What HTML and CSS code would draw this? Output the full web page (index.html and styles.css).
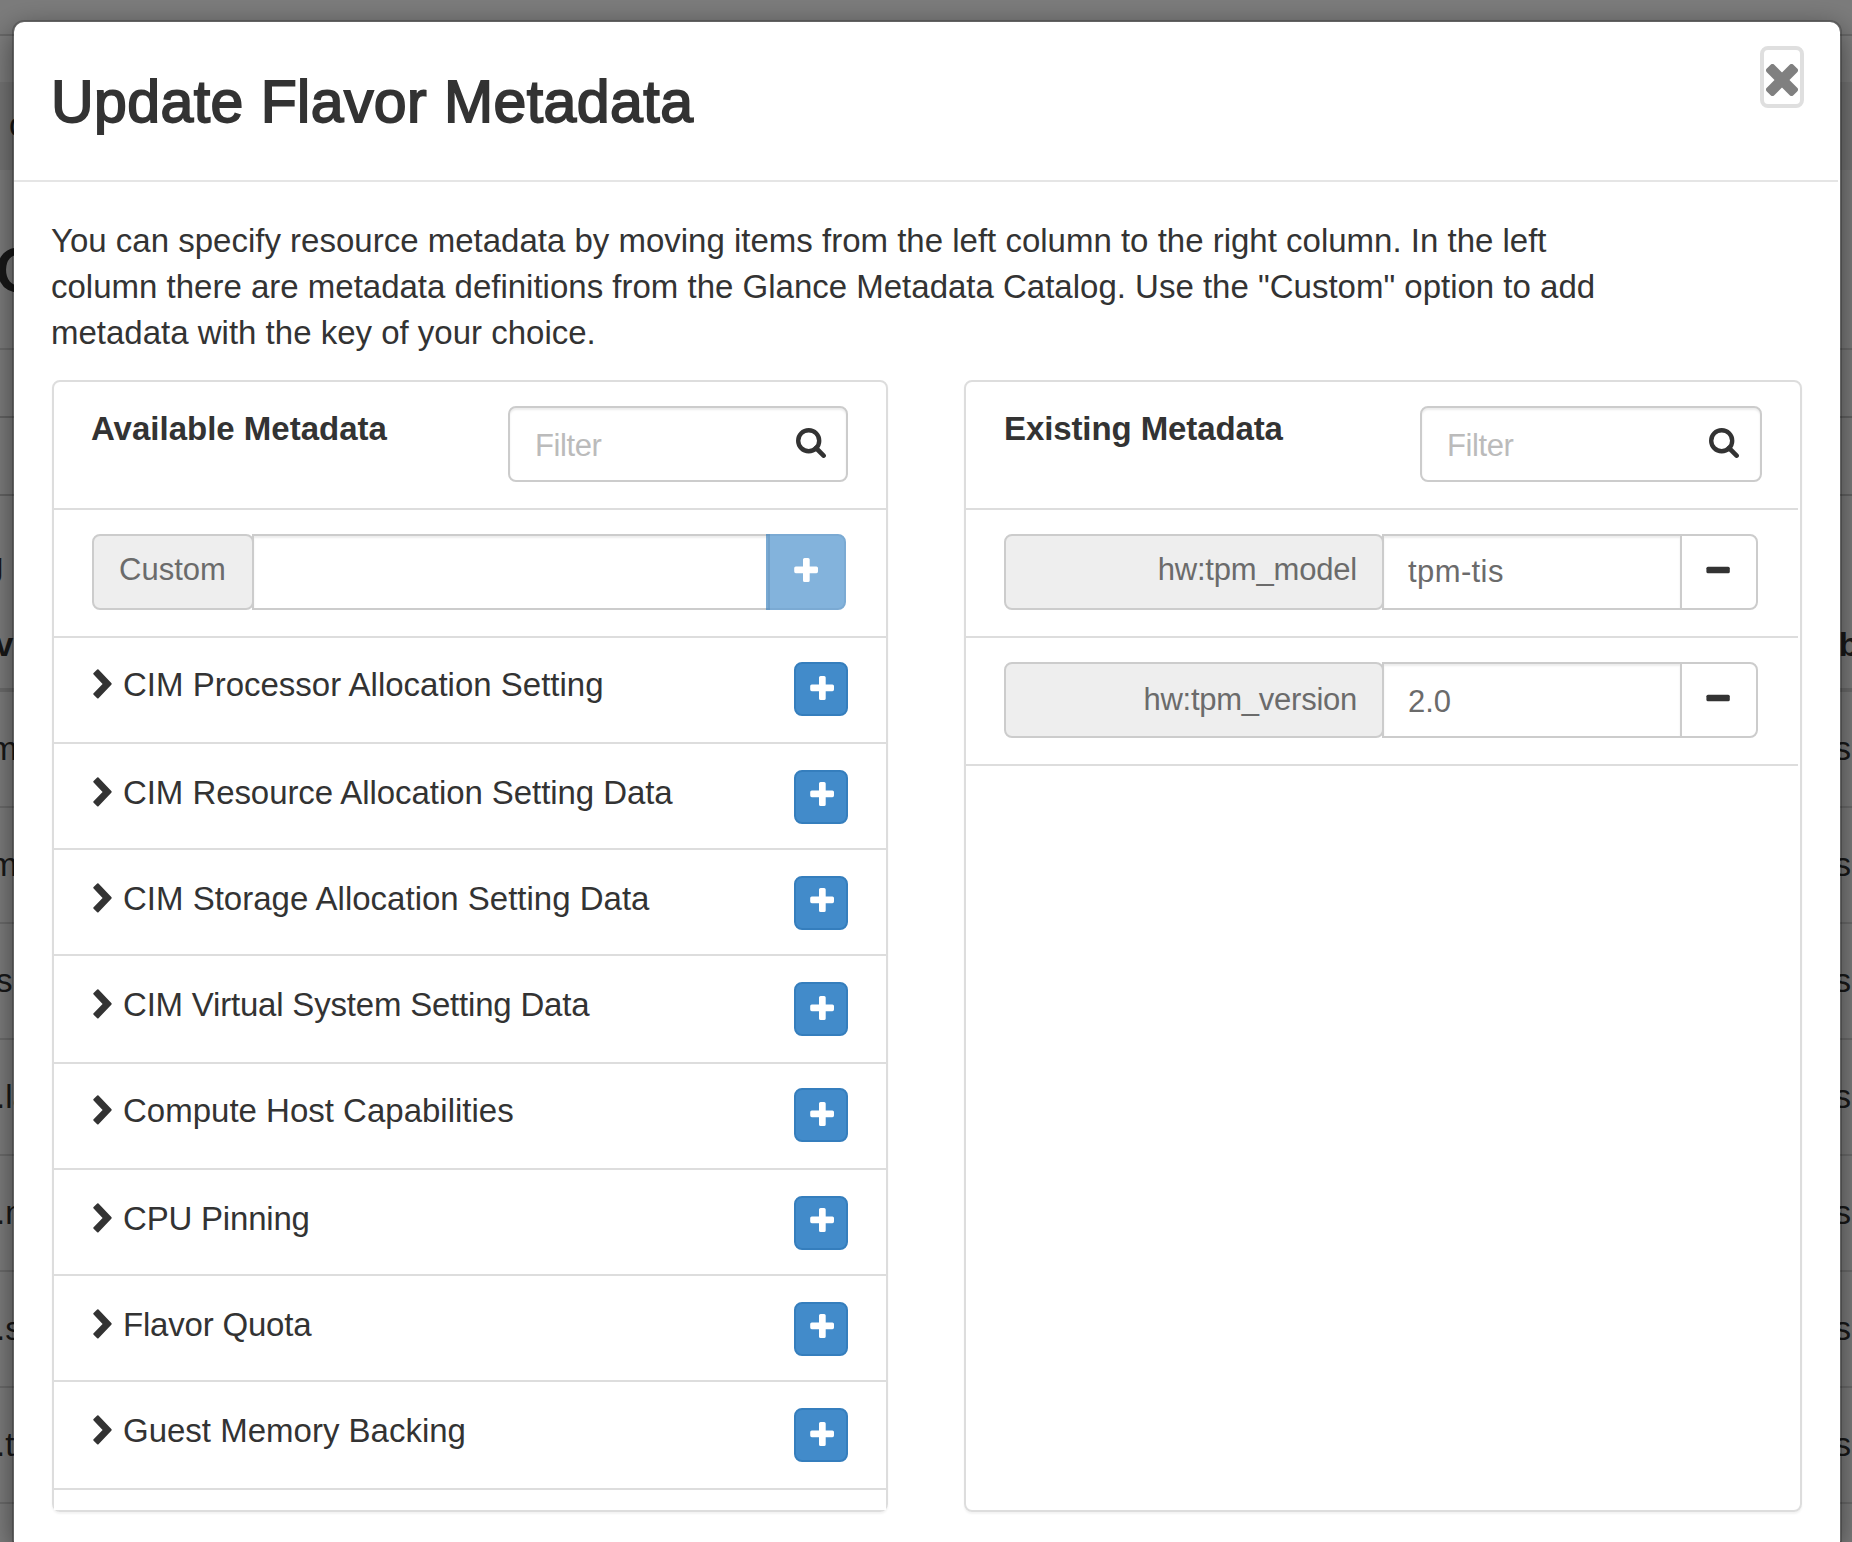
FILE: index.html
```html
<!DOCTYPE html>
<html lang="en">
<head>
<meta charset="utf-8">
<title>Update Flavor Metadata</title>
<link rel="stylesheet" href="styles.css">
</head>
<body>
<svg width="0" height="0" class="sprite" aria-hidden="true">
  <symbol id="plus" viewBox="0 0 24 24"><path d="M9.900 0h4.200a1.600 1.600 0 0 1 1.600 1.600v6.900h6.700a1.600 1.600 0 0 1 1.600 1.600v3.500a1.600 1.600 0 0 1-1.600 1.600h-6.700v7.200a1.600 1.600 0 0 1-1.600 1.600h-3.500a1.600 1.600 0 0 1-1.600-1.600v-7.200h-7.200a1.600 1.600 0 0 1-1.600-1.600v-3.500a1.600 1.600 0 0 1 1.600-1.600h7.200v-6.900a1.600 1.600 0 0 1 1.600-1.600z"/></symbol>
  <symbol id="minus" viewBox="0 0 24 24"><rect x=".4" y="8.700" width="23.400" height="6.600" rx="1.600"/></symbol>
  <symbol id="search" viewBox="0 0 30 30"><circle cx="12.700" cy="12.700" r="10.500" fill="none" stroke="currentColor" stroke-width="4.400"/><path d="M20 20l7.600 7.600" fill="none" stroke="currentColor" stroke-width="4.600" stroke-linecap="round"/></symbol>
  <symbol id="chevron" viewBox="0 0 19 30"><path d="M4.200 .5a1 1 0 0 1 1.300 0L18.300 13.900a1.400 1.400 0 0 1 0 1.900L5.500 29.200a1 1 0 0 1-1.300 0L.6 25.700a1 1 0 0 1 0-1.400L9.600 14.900.6 5.500a1 1 0 0 1 0-1.400z"/></symbol>
  <symbol id="cross" viewBox="0 0 32 32"><g transform="rotate(45 16 16)"><rect x="-2.800" y="10.700" width="37.600" height="10.600" rx="2.600"/><rect x="10.700" y="-2.800" width="10.600" height="37.600" rx="2.600"/></g></symbol>
</svg>

<div class="page">
  <div class="topbar"></div>
  <div class="spacer"></div>
  <div class="crumbs"><span>c</span></div>
  <div class="heading"><span>O</span></div>
  <div class="tools"></div>
  <div class="tools-b"></div>
  <div class="caption"><span>g</span></div>
  <div class="thead"><span>v</span><span>b</span></div>
  <div class="trow mid"><span>m</span><span>s</span></div>
  <div class="trow mid"><span>m</span><span>s</span></div>
  <div class="trow"><span>sm</span><span>s</span></div>
  <div class="trow"><span>.la</span><span>s</span></div>
  <div class="trow"><span>.m</span><span>s</span></div>
  <div class="trow"><span>.s</span><span>s</span></div>
  <div class="trow"><span>.t</span><span>s</span></div>
</div>
<div class="backdrop"></div>

<div class="modal">
  <header class="modal-header">
    <h3 class="title">Update Flavor Metadata</h3>
    <button class="close" aria-label="Close"><svg width="32" height="32"><use href="#cross"/></svg></button>
  </header>
  <div class="modal-body">
    <p class="help">You can specify resource metadata by moving items from the left column to the right column. In the left<br>column there are metadata definitions from the Glance Metadata Catalog. Use the "Custom" option to add<br>metadata with the key of your choice.</p>
    <div class="columns">
      <section class="panel available">
        <div class="panel-head">
          <strong>Available Metadata</strong>
          <div class="filter"><span>Filter</span><svg width="30" height="30"><use href="#search"/></svg></div>
        </div>
        <div class="row-group">
          <div class="addon">Custom</div>
          <div class="field"></div>
          <button class="add-custom" aria-label="Add"><svg width="24" height="24"><use href="#plus"/></svg></button>
        </div>
        <ul class="items">
          <li><svg width="19" height="30"><use href="#chevron"/></svg><span>CIM Processor Allocation Setting</span><button class="add" aria-label="Add"><svg width="24" height="24"><use href="#plus"/></svg></button></li>
          <li><svg width="19" height="30"><use href="#chevron"/></svg><span>CIM Resource Allocation Setting Data</span><button class="add high" aria-label="Add"><svg width="24" height="24"><use href="#plus"/></svg></button></li>
          <li><svg width="19" height="30"><use href="#chevron"/></svg><span>CIM Storage Allocation Setting Data</span><button class="add high" aria-label="Add"><svg width="24" height="24"><use href="#plus"/></svg></button></li>
          <li><svg width="19" height="30"><use href="#chevron"/></svg><span class="tight">CIM Virtual System Setting Data</span><button class="add" aria-label="Add"><svg width="24" height="24"><use href="#plus"/></svg></button></li>
          <li><svg width="19" height="30"><use href="#chevron"/></svg><span>Compute Host Capabilities</span><button class="add" aria-label="Add"><svg width="24" height="24"><use href="#plus"/></svg></button></li>
          <li><svg width="19" height="30"><use href="#chevron"/></svg><span class="tight">CPU Pinning</span><button class="add high" aria-label="Add"><svg width="24" height="24"><use href="#plus"/></svg></button></li>
          <li><svg width="19" height="30"><use href="#chevron"/></svg><span class="tight">Flavor Quota</span><button class="add high" aria-label="Add"><svg width="24" height="24"><use href="#plus"/></svg></button></li>
          <li><svg width="19" height="30"><use href="#chevron"/></svg><span>Guest Memory Backing</span><button class="add" aria-label="Add"><svg width="24" height="24"><use href="#plus"/></svg></button></li>
        </ul>
      </section>
      <section class="panel existing">
        <div class="panel-head">
          <strong>Existing Metadata</strong>
          <div class="filter"><span>Filter</span><svg width="30" height="30"><use href="#search"/></svg></div>
        </div>
        <div class="row-group">
          <div class="addon">hw:tpm_model</div>
          <div class="field">tpm-tis</div>
          <button class="remove" aria-label="Remove"><svg width="24" height="24"><use href="#minus"/></svg></button>
        </div>
        <div class="row-group second">
          <div class="addon">hw:tpm_version</div>
          <div class="field">2.0</div>
          <button class="remove" aria-label="Remove"><svg width="24" height="24"><use href="#minus"/></svg></button>
        </div>
      </section>
    </div>
  </div>
</div>
</body>
</html>
```
FILE: styles.css
```css
* { box-sizing: border-box; }
body {
  margin: 0;
  height: 1542px;
  overflow: hidden;
  position: relative;
  background: #fff;
  color: #333;
  font: 33px/46px "Liberation Sans", Arial, sans-serif;
}
svg { display: block; flex: none; fill: currentColor; }
.sprite { position: absolute; }
button { padding: 0; margin: 0; font: inherit; }

/* Page behind the dialog */
.page { height: 1542px; overflow: hidden; }
.topbar { height: 36px; background: #f8f8f8; border-bottom: 2px solid #d4d4d4; }
.spacer { height: 46px; }
.crumbs { height: 88px; background: #eee; padding: 20px 0 0 9px; }
.heading { height: 180px; border-bottom: 2px solid #ddd; font-size: 62px; line-height: 70px; padding-top: 65px; }
.heading span { margin-left: -4px; -webkit-text-stroke: 2.500px #333; }
.tools { height: 68px; border-bottom: 2px solid #ccc; }
.tools-b { height: 78px; border-bottom: 2px solid #ccc; }
.caption { height: 106px; padding-top: 46px; }
.caption span { margin-left: -15px; }
.thead { height: 90px; border-bottom: 4px solid #ddd; padding: 20px 0 0; display: flex; justify-content: space-between; font-weight: 700; }
.thead span:first-child { margin-left: -5px; }
.thead span:last-child { margin-right: -7px; }
.trow { height: 116px; border-bottom: 2px solid #ddd; padding-top: 34px; display: flex; justify-content: space-between; }
.trow span:first-child { margin-left: -4px; }
.trow.mid span:first-child { margin-left: -10px; }
.trow span:last-child { margin-right: 1px; }
.backdrop { position: absolute; inset: 0; background: rgba(0, 0, 0, .5); }

/* Dialog */
.modal {
  position: absolute;
  left: 12px;
  top: 20px;
  width: 1830px;
  height: 1522px;
  border: 2px solid rgba(0, 0, 0, .2);
  border-bottom: 0;
  border-radius: 12px 12px 0 0;
  background: #fff;
  background-clip: padding-box;
  box-shadow: 0 10px 30px rgba(0, 0, 0, .5);
}
.modal-header {
  height: 160px;
  margin-right: 2px;
  border-bottom: 2px solid #e5e5e5;
  padding: 24px 34px 0 37px;
  display: flex;
  justify-content: space-between;
  align-items: flex-start;
}
.title { margin: 23px 0 0; font-size: 59px; line-height: 66px; font-weight: 400; letter-spacing: .430px; -webkit-text-stroke: 1.800px #333; white-space: nowrap; }
.close {
  width: 44px;
  height: 62px;
  border: 4px solid #dfdfdf;
  border-radius: 8px;
  background: #fff;
  color: #808080;
  padding: 14px 0 0 2px;
  display: flex;
  align-items: flex-start;
}
.modal-body { padding: 36px 38px 0; }
.help { margin: 0 0 24px -1px; white-space: nowrap; }
.columns { display: flex; gap: 76px; }
.panel {
  height: 1132px;
  border: 2px solid #ddd;
  border-radius: 8px;
  box-shadow: 0 2px 2px rgba(0, 0, 0, .05);
}
.available { width: 836px; }
.existing { width: 838px; }
.existing .panel-head, .existing .row-group { margin-right: 2px; }
.panel-head {
  height: 128px;
  border-bottom: 2px solid #ddd;
  padding: 24px 38px 0 37px;
  display: flex;
  justify-content: space-between;
  align-items: flex-start;
}
.existing .panel-head { padding: 24px 36px 0 38px; }
.panel-head strong { line-height: 46px; }
.existing strong { letter-spacing: -.1px; }
.filter {
  width: 340px;
  height: 76px;
  border: 2px solid #ccc;
  border-radius: 8px;
  box-shadow: inset 0 2px 2px rgba(0, 0, 0, .075);
  padding: 17px 20px 0 25px;
  display: flex;
  justify-content: space-between;
  font-size: 31px;
  letter-spacing: -.4px;
  line-height: 42px;
  color: #bbb;
}
.existing .filter { width: 342px; padding-right: 21px; }
.filter svg { color: #333; margin-top: 3px; }
.row-group {
  height: 128px;
  border-bottom: 2px solid #ddd;
  padding: 24px 40px 0 38px;
  display: flex;
  font-size: 31px;
  line-height: 42px;
  color: #6b6b6b;
}
.addon {
  height: 76px;
  width: 162px;
  border: 2px solid #ccc;
  border-radius: 8px;
  background: #eee;
  padding: 13px 25px 0;
}
.field {
  flex: 1;
  height: 76px;
  margin-left: -2px;
  border: 2px solid #ccc;
  box-shadow: inset 0 2px 2px rgba(0, 0, 0, .075);
  background: #fff;
  padding: 15px 24px 0;
}
.add-custom, .remove {
  width: 78px;
  height: 76px;
  border-radius: 0 8px 8px 0;
  padding: 0 0 0 24px;
}
.add-custom {
  width: 80px;
  margin-left: -4px;
  border: 2px solid #357ebd;
  background: #428bca;
  color: #fff;
  opacity: .65;
  padding: 0 0 4px 26px;
}
.existing .addon { width: 380px; text-align: right; letter-spacing: -.190px; }
.existing .field { letter-spacing: .4px; }
.existing .second .addon { padding-top: 15px; letter-spacing: -.250px; }
.existing .second .field { padding-top: 17px; letter-spacing: 0; }
.remove { margin-left: -2px; border: 2px solid #ccc; background: #fff; color: #333; padding-bottom: 4px; }
.items { list-style: none; margin: 0; padding: 0 0 20px; background: #fff; }
.items li {
  height: 106px;
  border-bottom: 2px solid #ddd;
  padding: 26px 38px 0 39px;
  display: flex;
  align-items: flex-start;
}
.items li:nth-child(4), .items li:nth-child(8) { height: 108px; }
.items li:nth-child(1), .items li:nth-child(5) { padding-top: 24px; }
.items svg { margin-top: 7px; }
.items span { margin-left: 11px; flex: none; }
.items li:nth-child(2) span { letter-spacing: -.070px; }
.items .tight { letter-spacing: -.2px; }
.add {
  width: 54px;
  height: 54px;
  margin-left: auto;
  border: 2px solid #357ebd;
  border-radius: 8px;
  background: #428bca;
  color: #fff;
  padding: 12px 0 0 14px;
  display: flex;
  align-items: flex-start;
}
.items .add svg { margin: 0; }
.add.high { padding-top: 10px; }
```
